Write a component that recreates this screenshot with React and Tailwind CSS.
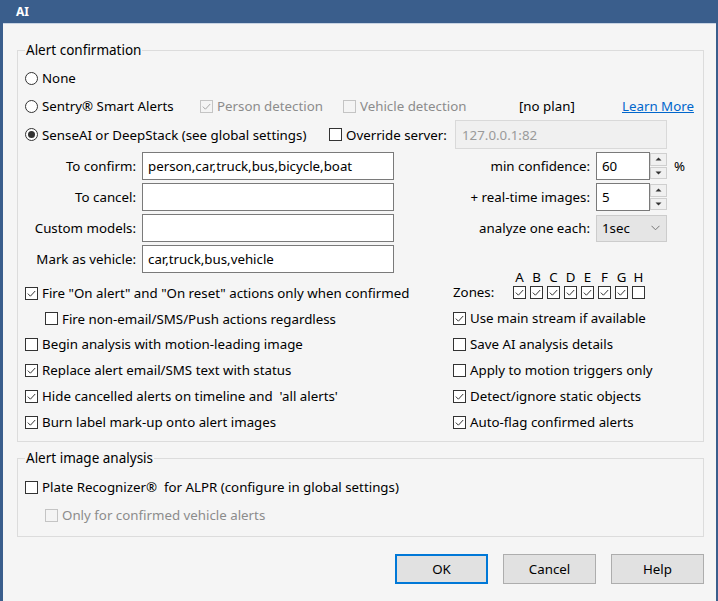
import React from 'react';

const Check = ({ checked, disabled }) => (
  <span
    className={`w-[13px] h-[13px] border flex items-center justify-center shrink-0 ${
      disabled ? 'border-[#c4c4c4] bg-[#f4f4f4]' : 'border-[#333333] bg-white'
    }`}
  >
    {checked && (
      <svg width="11" height="11" viewBox="0 0 11 11">
        <path d="M1.8 5.6l2.6 2.6 4.8-5.2" fill="none" stroke={disabled ? '#a6a6a6' : '#333333'} strokeWidth="1" />
      </svg>
    )}
  </span>
);

const Radio = ({ checked }) => (
  <span className="w-[13px] h-[13px] rounded-full border border-[#333333] bg-white flex items-center justify-center shrink-0">
    {checked && <span className="w-[7px] h-[7px] rounded-full bg-[#333333]" />}
  </span>
);

const CheckRow = ({ checked, disabled, children, className = 'h-[26px]' }) => (
  <div className={`flex items-center gap-[4px] ${className}`}>
    <Check checked={checked} disabled={disabled} />
    <span className={disabled ? 'text-[#8c8c8c]' : ''}>{children}</span>
  </div>
);

const Spinner = () => (
  <div className="w-[17px] h-[28px] flex flex-col gap-[1px] py-[1px]">
    <div className="flex-1 bg-[#f0f0f0] border border-[#cfcfcf] flex items-center justify-center">
      <svg width="7" height="4" viewBox="0 0 7 4"><path d="M0.5 3.5L3.5 0.5 6.5 3.5Z" fill="#333" /></svg>
    </div>
    <div className="flex-1 bg-[#f0f0f0] border border-[#cfcfcf] flex items-center justify-center">
      <svg width="7" height="4" viewBox="0 0 7 4"><path d="M0.5 0.5L3.5 3.5 6.5 0.5Z" fill="#333" /></svg>
    </div>
  </div>
);

const Field = ({ value }) => (
  <div className="w-[252px] h-[28px] ml-[6px] border border-[#7a7a7a] bg-white flex items-center pl-[5px]">{value}</div>
);

const Label = ({ children }) => <div className="w-[111px] text-right">{children}</div>;

const RightLabel = ({ children }) => <div className="w-[196px] text-right">{children}</div>;

const App = () => {
  const zones = ['A', 'B', 'C', 'D', 'E', 'F', 'G', 'H'];
  const zoneOn = [true, true, true, true, true, true, true, false];

  return (
    <div className="w-[718px] h-[601px] bg-[#3a5e8c] flex flex-col font-['Noto_Sans',sans-serif] text-[13.3px] leading-[18px] text-black overflow-hidden">
      <div className="h-[23px] shrink-0 flex items-center pl-[16px] text-white font-bold text-[12px]">AI</div>

      <div className="flex-1 ml-[3px] mr-[2px] bg-[#f5f5f5] border-t border-[#c7d3e3] flex flex-col pl-[14px] pr-[12px]">
        <fieldset className="mt-[17px] border border-[#dcdcdc] pl-[7px] pb-[6px]">
          <legend className="px-[1px] text-[13.5px]">Alert confirmation</legend>

          <div className="mt-[5px] h-[28px] flex items-center gap-[4px]">
            <Radio />
            <span>None</span>
          </div>

          <div className="h-[28px] flex items-center">
            <div className="w-[175px] flex items-center gap-[4px]">
              <Radio />
              <span>Sentry® Smart Alerts</span>
            </div>
            <div className="w-[143px]">
              <CheckRow checked disabled className="">Person detection</CheckRow>
            </div>
            <div className="w-[176px]">
              <CheckRow disabled className="">Vehicle detection</CheckRow>
            </div>
            <div className="w-[103px]">[no plan]</div>
            <span className="text-[#0066cc] underline">Learn More</span>
          </div>

          <div className="h-[29px] flex items-center">
            <div className="w-[304px] flex items-center gap-[4px]">
              <Radio checked />
              <span>SenseAI or DeepStack (see global settings)</span>
            </div>
            <div className="w-[126px]">
              <CheckRow className="">Override server:</CheckRow>
            </div>
            <div className="w-[212px] h-[29px] bg-[#f0f0f0] border border-[#d9d9d9] flex items-center pl-[6px] text-[#9a9a9a]">
              127.0.0.1:82
            </div>
          </div>

          <div className="mt-[3px] flex flex-col gap-[3px]">
            <div className="h-[28px] flex items-center">
              <Label>To confirm:</Label>
              <Field value="person,car,truck,bus,bicycle,boat" />
              <RightLabel>min confidence:</RightLabel>
              <div className="ml-[6px] w-[54px] h-[28px] border border-[#7a7a7a] bg-white flex items-center pl-[5px]">60</div>
              <Spinner />
              <span className="ml-[7px]">%</span>
            </div>
            <div className="h-[28px] flex items-center">
              <Label>To cancel:</Label>
              <Field value="" />
              <RightLabel>+ real-time images:</RightLabel>
              <div className="ml-[6px] w-[54px] h-[28px] border border-[#7a7a7a] bg-white flex items-center pl-[5px]">5</div>
              <Spinner />
            </div>
            <div className="h-[28px] flex items-center">
              <Label>Custom models:</Label>
              <Field value="" />
              <RightLabel>analyze one each:</RightLabel>
              <div className="ml-[6px] w-[71px] h-[27px] border border-[#cccccc] bg-[#e5e5e5] flex items-center justify-between pl-[5px] pr-[6px]">
                <span>1sec</span>
                <svg width="9" height="6" viewBox="0 0 9 6"><path d="M0.5 0.8L4.5 4.8 8.5 0.8" fill="none" stroke="#777" strokeWidth="1" /></svg>
              </div>
            </div>
            <div className="h-[28px] flex items-center">
              <Label>Mark as vehicle:</Label>
              <Field value="car,truck,bus,vehicle" />
            </div>
          </div>

          <div className="-mt-[3px] flex">
            <div className="w-[428px] pt-[10px] flex flex-col">
              <CheckRow checked>Fire "On alert" and "On reset" actions only when confirmed</CheckRow>
              <div className="pl-[20px]">
                <CheckRow className="h-[25px]">Fire non-email/SMS/Push actions regardless</CheckRow>
              </div>
              <CheckRow>Begin analysis with motion-leading image</CheckRow>
              <CheckRow checked>Replace alert email/SMS text with status</CheckRow>
              <CheckRow checked>Hide cancelled alerts on timeline and &nbsp;'all alerts'</CheckRow>
              <CheckRow checked>Burn label mark-up onto alert images</CheckRow>
            </div>
            <div className="flex flex-col">
              <div className="h-[14px] flex items-center pl-[60px] gap-[4px] leading-[14px]">
                {zones.map((z) => (
                  <span key={z} className="w-[13px] text-center">{z}</span>
                ))}
              </div>
              <div className="h-[16px] flex items-center">
                <span className="w-[60px]">Zones:</span>
                <div className="flex gap-[4px]">
                  {zoneOn.map((on, i) => (
                    <Check key={i} checked={on} />
                  ))}
                </div>
              </div>
              <div className="mt-[5px] flex flex-col">
                <CheckRow checked>Use main stream if available</CheckRow>
                <CheckRow>Save AI analysis details</CheckRow>
                <CheckRow>Apply to motion triggers only</CheckRow>
                <CheckRow checked>Detect/ignore static objects</CheckRow>
                <CheckRow checked>Auto-flag confirmed alerts</CheckRow>
              </div>
            </div>
          </div>
        </fieldset>

        <fieldset className="mt-[7px] border border-[#dcdcdc] pl-[7px] pb-[7px]">
          <legend className="px-[1px] text-[13.5px]">Alert image analysis</legend>
          <div className="pt-[6px]">
            <CheckRow className="h-[28px]">Plate Recognizer®&nbsp; for ALPR (configure in global settings)</CheckRow>
            <div className="pl-[20px]">
              <CheckRow disabled className="h-[28px]">Only for confirmed vehicle alerts</CheckRow>
            </div>
          </div>
        </fieldset>

        <div className="mt-[17px] flex justify-end gap-[15px]">
          <button className="w-[93px] h-[30px] bg-[#e1e1e1] border-2 border-[#0078d7]">OK</button>
          <button className="w-[93px] h-[30px] bg-[#e1e1e1] border border-[#adadad]">Cancel</button>
          <button className="w-[93px] h-[30px] bg-[#e1e1e1] border border-[#adadad]">Help</button>
        </div>
      </div>
    </div>
  );
};

export default App;
